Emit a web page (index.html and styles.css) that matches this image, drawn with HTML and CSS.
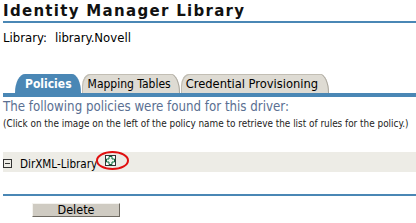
FILE: index.html
```html
<!DOCTYPE html>
<html>
<head>
<meta charset="utf-8">
<link rel="stylesheet" href="styles.css">
</head>
<body>
<div class="page">
  <h1 class="title">Identity Manager Library</h1>
  <div class="libline"><span class="lbl">Library:</span><span class="val">library.Novell</span></div>
  <div class="tabs">
    <div class="tab active">Policies</div>
    <div class="tab">Mapping Tables</div>
    <div class="tab wide">Credential Provisioning</div>
  </div>
  <div class="tabbar"></div>
  <div class="heading">The following policies were found for this driver:</div>
  <div class="hint">(Click on the image on the left of the policy name to retrieve the list of rules for the policy.)</div>
  <div class="row">
    <span class="minus"></span>
    <span class="name">DirXML-Library</span>
    <span class="plus-wrap">
      <svg class="plus" width="11" height="11" viewBox="0 0 11 11">
        <rect x="0.5" y="0.5" width="10" height="10" fill="#fff" stroke="#333"/>
        <path d="M4 1.5H7V4H9.5V7H7V9.5H4V7H1.5V4H4Z" fill="#eef7f0" stroke="#0b6b3c" stroke-width="1"/>
      </svg>
      <span class="ring"></span>
    </span>
  </div>
  <div class="rule"></div>
  <div class="actions"><button class="btn">Delete</button></div>
</div>
</body>
</html>
```
FILE: styles.css
```css
html, body { margin: 0; padding: 0; background: #fff; }
body { font-family: "DejaVu Sans Condensed", "DejaVu Sans", sans-serif; color: #000; }
.page { padding: 3px 0 0 3px; }
.title {
  margin: 0;
  font-family: "DejaVu Sans", sans-serif;
  font-size: 15px;
  font-weight: bold;
  letter-spacing: 1.3px;
  line-height: 17px;
  height: 18px;
  border-bottom: 2px solid #4a87b5;
  color: #111;
}
.libline { margin-top: 7px; font-size: 13px; line-height: 15px; height: 15px; }
.lbl { margin-right: 8px; }
.tabs { display: flex; margin-top: 29px; padding-left: 12px; height: 19px; align-items: flex-end; }
.tab {
  position: relative;
  height: 19px;
  line-height: 20px;
  font-size: 12px;
  padding: 0 9px 0 6px;
  background: #dedbd3;
  color: #000;
  border-top-left-radius: 8px 12px;
  border-top-right-radius: 9px 19px;
  box-shadow: inset 1px 1px 0 #c2beb4, inset -1px 0 0 #a9a59c;
  margin-right: 1px;
}
.tab.wide { font-size: 12.8px; padding: 0 11px 0 5px; }
.tab.active {
  background: #4a87b5; color: #fff; font-weight: bold;
  padding: 0 9px 0 10px; box-shadow: none;
  border-top-left-radius: 10px 19px;
}
.tabbar { height: 4px; background: #4a87b5; }
.heading { margin-top: 1px; font-size: 13.2px; line-height: 17px; height: 17px; color: #5a6f92; }
.hint { margin-top: 3px; font-size: 9.9px; line-height: 12px; height: 12px; color: #222; }
.row {
  margin-top: 22px;
  background: #edece6;
  height: 20px;
  display: flex;
  align-items: center;
  font-size: 11.6px;
}
.minus {
  width: 7px; height: 7px; border: 1px solid #333; position: relative; margin-right: 8px; margin-top: 2px;
}
.minus::after { content: ""; position: absolute; left: 1px; right: 1px; top: 3px; height: 1px; background: #333; }
.name { line-height: 20px; margin-top: 4px; }
.plus-wrap { position: relative; display: inline-flex; margin-left: 8px; align-self: flex-start; margin-top: 3px; }
.ring {
  position: absolute; left: -9px; top: -4px; width: 29px; height: 15px;
  border: 2px solid #e01010; border-radius: 50%;
}
.rule { margin-top: 22px; height: 2px; background: #4a87b5; }
.actions { padding-left: 29px; margin-top: 7px; }
.btn {
  display: block;
  font-family: "DejaVu Sans Condensed", "DejaVu Sans", sans-serif;
  font-size: 12.5px;
  width: 88px; height: 14px; padding: 0; line-height: 12px;
  background: #cfcbc2;
  border: 1px solid; border-color: #f4f3ef #6e6a62 #6e6a62 #f4f3ef;
  color: #000;
}
```
